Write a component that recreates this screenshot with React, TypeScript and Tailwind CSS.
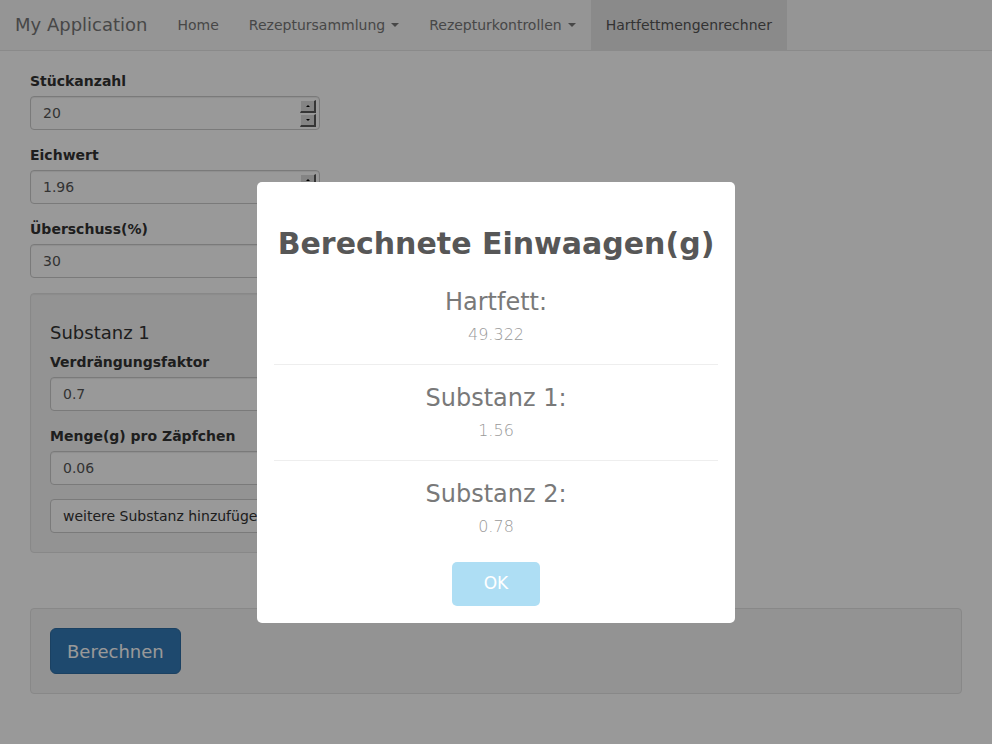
import React from "react"

const font = { fontFamily: '"DejaVu Sans", Verdana, sans-serif' }

function Caret() {
  return <span className="ml-[6px] inline-block w-0 h-0 align-middle border-t-[4px] border-t-[#777] border-x-[4px] border-x-transparent" />
}

function Spinner() {
  return (
    <div className="flex flex-col ml-auto -mr-[9px] gap-px">
      {["up", "down"].map((d) => (
        <div
          key={d}
          className="w-[16px] h-[13px] bg-[#dcdcdc] border-t border-l border-t-white border-l-white border-r-2 border-b-2 border-r-[#5a5a5a] border-b-[#5a5a5a] flex items-center justify-center"
        >
          <span
            className={`w-0 h-0 border-x-[2px] border-x-transparent ${d === "up" ? "border-b-[2px] border-b-black" : "border-t-[2px] border-t-black"}`}
          />
        </div>
      ))}
    </div>
  )
}

function Field({ label, value, spin }: { label: string; value: string; spin?: boolean }) {
  return (
    <div className="mb-[15px]">
      <label className="block text-[14px] leading-[20px] font-bold text-[#333] mb-[5px]">{label}</label>
      <div className="h-[34px] flex items-center px-[12px] bg-white border border-[#ccc] rounded-[4px] shadow-[inset_0_1px_1px_rgba(0,0,0,0.075)] text-[14px] text-[#555]">
        <span>{value}</span>
        {spin && <Spinner />}
      </div>
    </div>
  )
}

const results = [
  { name: "Hartfett:", value: "49.322" },
  { name: "Substanz 1:", value: "1.56" },
  { name: "Substanz 2:", value: "0.78" },
]

export default function App() {
  return (
    <div className="relative min-h-[744px] bg-white text-[#333]" style={font}>
      <nav className="h-[51px] bg-[#f8f8f8] border-b border-[#e7e7e7] flex text-[14px] leading-[20px] text-[#777]">
        <a className="px-[15px] py-[15px] text-[18px] text-[#777]">My Application</a>
        <a className="px-[15px] py-[15px]">Home</a>
        <a className="px-[15px] py-[15px] flex items-center">Rezeptursammlung<Caret /></a>
        <a className="px-[15px] py-[15px] flex items-center">Rezepturkontrollen<Caret /></a>
        <a className="px-[15px] py-[15px] bg-[#e7e7e7] text-[#555]">Hartfettmengenrechner</a>
      </nav>

      <div className="px-[30px] pt-[20px]">
        <div className="w-[290px]">
          <Field label="Stückanzahl" value="20" spin />
          <Field label="Eichwert" value="1.96" spin />
          <Field label="Überschuss(%)" value="30" />
          <div className="bg-[#f5f5f5] border border-[#e3e3e3] rounded-[4px] p-[19px] shadow-[inset_0_1px_1px_rgba(0,0,0,0.05)]">
            <h4 className="mt-[10px] mb-[9px] text-[18px] leading-[20px] text-[#333]">Substanz 1</h4>
            <Field label="Verdrängungsfaktor" value="0.7" />
            <Field label="Menge(g) pro Zäpfchen" value="0.06" />
            <button className="h-[34px] px-[12px] bg-white border border-[#ccc] rounded-[4px] text-[14px] text-[#333] whitespace-nowrap -mt-[1px]">
              weitere Substanz hinzufügen
            </button>
          </div>
        </div>
        <div className="mt-[55px] bg-[#f5f5f5] border border-[#e3e3e3] rounded-[4px] p-[19px]">
          <button className="h-[46px] px-[16px] bg-[#337ab7] border border-[#2e6da4] rounded-[6px] text-[18px] text-white">
            Berechnen
          </button>
        </div>
      </div>

      <div className="fixed inset-0 bg-black/40 flex justify-center pt-[182px]">
        <div className="w-[478px] h-[441px] bg-white rounded-[5px] p-[17px] flex flex-col items-center text-center">
          <h2 className="mt-[25px] text-[30px] leading-[40px] font-bold text-[#575757]">Berechnete Einwaagen(g)</h2>
          <div className="w-full mt-[25px]">
            {results.map((r, i) => (
              <div key={r.name} className={i > 0 ? "border-t border-[#eee] pt-[20px] mt-[18px]" : ""}>
                <div className="text-[24px] leading-[26px] text-[#797979]">{r.name}</div>
                <div className="mt-[9px] text-[16px] leading-[22px] font-light text-[#999]">{r.value}</div>
              </div>
            ))}
          </div>
          <button className="mt-[24px] w-[88px] h-[44px] bg-[#aedef4] rounded-[5px] text-white text-[17px]">OK</button>
        </div>
      </div>
    </div>
  )
}
